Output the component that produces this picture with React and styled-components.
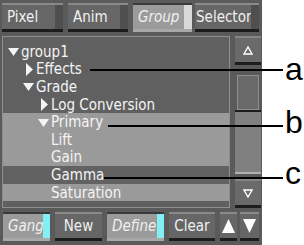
import React from 'react';
import styled, { createGlobalStyle, css } from 'styled-components';

const Global = createGlobalStyle`
	body {
		margin: 0;
		background: #fff;
		font-family: "DejaVu Sans", sans-serif;
	}
`;

const Page = styled.div`
	position: relative;
	width: 304px;
	height: 245px;
	background: #fff;
	overflow: hidden;
`;

const Panel = styled.div`
	width: 262px;
	height: 245px;
	background: #5a5a5a;
	display: flex;
	flex-direction: column;
	box-sizing: border-box;
	padding: 3px 0 0 2px;
	gap: 4px;
`;

const Bar = styled.div`
	display: flex;
	height: 29px;
	flex: none;
	padding-left: ${p => p.pad || 0}px;
`;

const Btn = styled.div`
	box-sizing: border-box;
	width: ${p => p.w}px;
	margin-left: ${p => p.gap || 0}px;
	height: 29px;
	display: flex;
	align-items: center;
	justify-content: ${p => (p.center ? 'center' : 'flex-start')};
	padding-left: ${p => (p.center ? 0 : p.pl ?? 5)}px;
	font-size: 15px;
	font-stretch: condensed;
	color: #f0f0f0;
	background: ${p => (p.on ? '#9b9b9b' : '#666666')};
	border-top: 2px solid ${p => (p.on ? '#3a3a3a' : '#8a8a8a')};
	border-bottom: 3px solid ${p => (p.on ? '#a8a8a8' : '#1c1c1c')};
	font-style: ${p => (p.on ? 'italic' : 'normal')};
	position: relative;
	${p => p.tab && css`
		&::after {
			content: '';
			position: absolute;
			right: 0;
			top: 0;
			bottom: 0;
			width: ${p.tw || 8}px;
			background: ${p.tab};
		}
	`}
`;

const Body = styled.div`
	display: flex;
	height: 172px;
	flex: none;
`;

const Tree = styled.div`
	box-sizing: border-box;
	width: 228px;
	border: 1px solid #8e8e8e;
	background: #606060;
	padding-top: 6px;
	display: flex;
	flex-direction: column;
`;

const Row = styled.div`
	height: 17.6px;
	flex: none;
	display: flex;
	align-items: center;
	padding-left: ${p => 5 + p.level * 15}px;
	background: ${p => (p.sel ? '#626262' : p.light ? '#9a9a9a' : 'transparent')};
	color: #f4f4f4;
	font-size: 15px;
	font-stretch: condensed;
	white-space: nowrap;
`;

const Arrow = styled.svg`
	width: 13px;
	height: 13px;
	flex: none;
`;

const Spacer = styled.span`
	display: inline-block;
	width: 13px;
`;

const Scroll = styled.div`
	width: 26px;
	margin-left: 5px;
	display: flex;
	flex-direction: column;
`;

const ScrollBtn = styled.div`
	box-sizing: border-box;
	height: 29px;
	background: #6a6a6a;
	border-top: 2px solid #868686;
	border-bottom: 3px solid #1c1c1c;
	display: flex;
	align-items: center;
	justify-content: center;
	flex: none;
`;

const Track = styled.div`
	flex: 1;
	display: flex;
	flex-direction: column;
	padding: 8px 0 5px;
`;

const Thumb = styled.div`
	box-sizing: border-box;
	height: 39px;
	background: #5a5a5a;
	padding: 2px 2px 0;
	border-bottom: 2px solid #1c1c1c;
	display: flex;
	&::before {
		content: '';
		flex: 1;
		background: #6a6a6a;
		border: 1px solid #8e8e8e;
	}
`;

const Rest = styled.div`
	flex: 1;
	background: #808080;
	border-bottom: 2px solid #b0b0b0;
`;

const Note = styled.div`
	position: absolute;
	left: ${p => p.x}px;
	top: ${p => p.y}px;
	width: ${p => 283 - p.x}px;
	height: 2px;
	background: #000;
`;

const Letter = styled.div`
	position: absolute;
	left: 285px;
	top: ${p => p.y}px;
	font-family: "Liberation Sans", Arial, sans-serif;
	font-size: 32px;
	color: #000;
	line-height: 1;
`;

const Down = () => (
	<Arrow viewBox="0 0 13 13"><polygon points="0,3 11,3 5.5,11" fill="#f4f4f4" /></Arrow>
);
const Right = () => (
	<Arrow viewBox="0 0 13 13"><polygon points="3,0 10,6.5 3,13" fill="#f4f4f4" /></Arrow>
);

const rows = [
	{ t: 'group1', level: 0, icon: 'down' },
	{ t: 'Effects', level: 1, icon: 'right' },
	{ t: 'Grade', level: 1, icon: 'down' },
	{ t: 'Log Conversion', level: 2, icon: 'right' },
	{ t: 'Primary', level: 2, icon: 'down', light: true },
	{ t: 'Lift', level: 2, light: true },
	{ t: 'Gain', level: 2, light: true },
	{ t: 'Gamma', level: 2, sel: true },
	{ t: 'Saturation', level: 2, light: true },
];

export default function App() {
	return (
		<Page>
			<Global />
			<Panel>
				<Bar>
					<Btn w={61} tab="#4f4f4f">Pixel</Btn>
					<Btn w={60} gap={5} tab="#4f4f4f">Anim</Btn>
					<Btn w={59} gap={5} on tab="#d8d8d8">Group</Btn>
					<Btn w={64} gap={3} pl={1} tab="#4f4f4f">Selector</Btn>
				</Bar>
				<Body>
					<Tree>
						{rows.map(r => (
							<Row key={r.t} level={r.level} light={r.light} sel={r.sel}>
								{r.icon === 'down' ? <Down /> : r.icon === 'right' ? <Right /> : <Spacer />}
								{r.t}
							</Row>
						))}
					</Tree>
					<Scroll>
						<ScrollBtn>
							<svg width="10" height="9" viewBox="0 0 10 9"><polygon points="5,1 9,8 1,8" fill="none" stroke="#fff" strokeWidth="1.4" /></svg>
						</ScrollBtn>
						<Track>
							<Thumb />
							<Rest />
						</Track>
						<ScrollBtn>
							<svg width="10" height="9" viewBox="0 0 10 9"><polygon points="1,1 9,1 5,8" fill="none" stroke="#fff" strokeWidth="1.4" /></svg>
						</ScrollBtn>
					</Scroll>
				</Body>
				<Bar pad={1}>
					<Btn w={47} on tw={7} tab="#80f0f4">Gang</Btn>
					<Btn w={47} gap={5} center>New</Btn>
					<Btn w={57} gap={5} on tw={7} tab="#80f0f4">Define</Btn>
					<Btn w={46} gap={5} center>Clear</Btn>
					<Btn w={17} gap={5} center>
						<svg width="13" height="14" viewBox="0 0 13 14"><polygon points="6.5,0 13,14 0,14" fill="#fff" /></svg>
					</Btn>
					<Btn w={19} gap={3} center>
						<svg width="13" height="14" viewBox="0 0 13 14"><polygon points="0,0 13,0 6.5,14" fill="#fff" /></svg>
					</Btn>
				</Bar>
			</Panel>
			<Note x={90} y={69} />
			<Letter y={53}>a</Letter>
			<Note x={108} y={125} />
			<Letter y={106}>b</Letter>
			<Note x={104} y={177} />
			<Letter y={157}>c</Letter>
		</Page>
	);
}
